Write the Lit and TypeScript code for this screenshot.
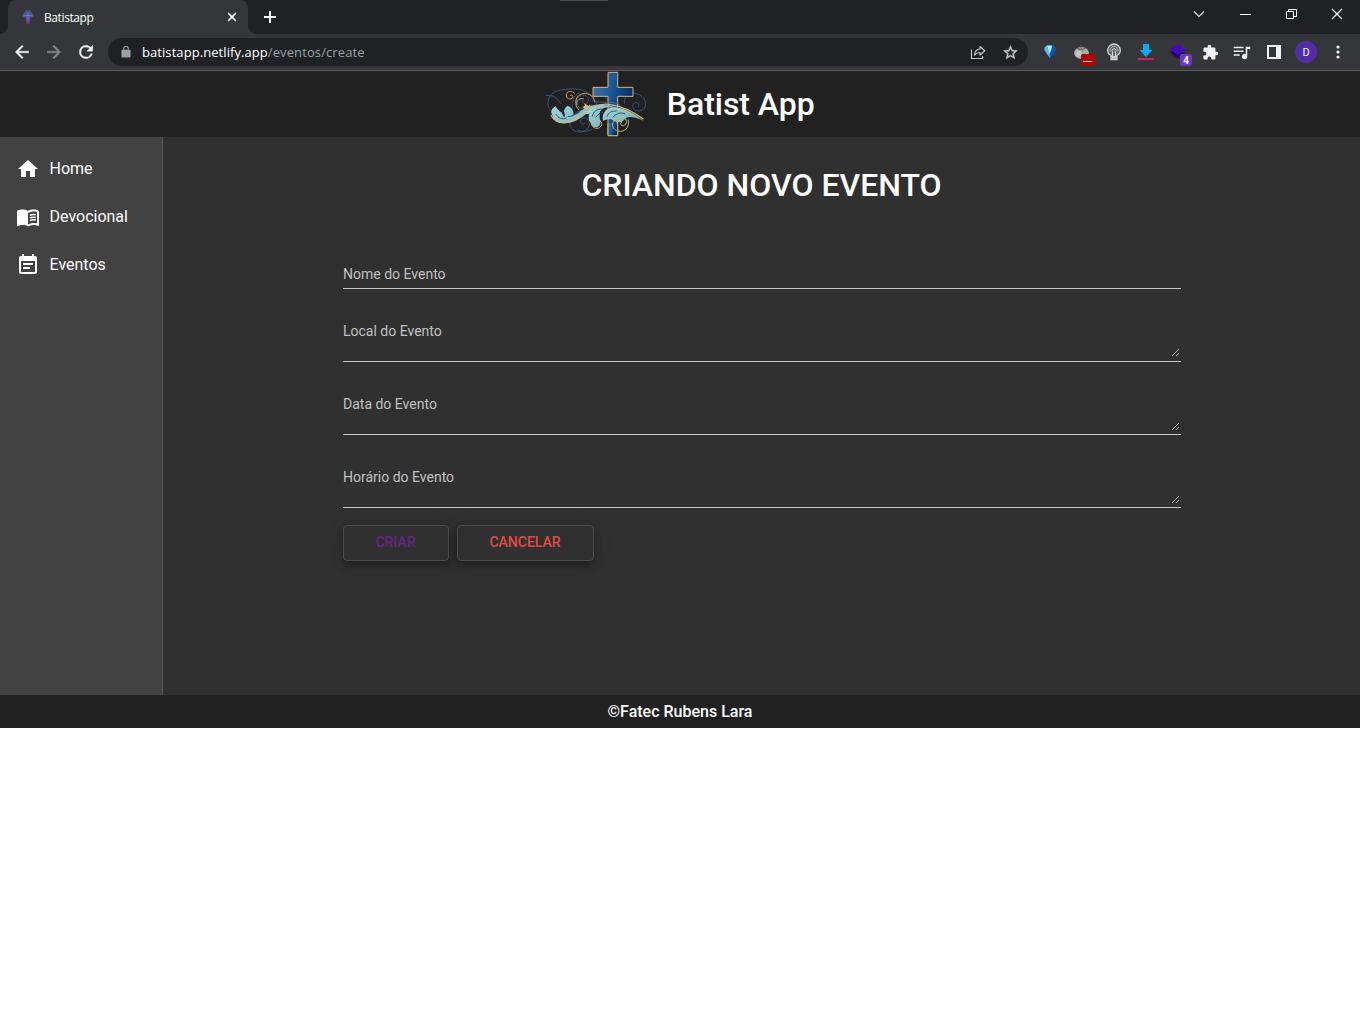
import { LitElement, html, svg, css } from "lit";
import { customElement, property } from "lit/decorators.js";

const icon = (size: number, body: unknown, box = "0 0 24 24") =>
  html`<svg width=${size} height=${size} viewBox=${box} fill="currentColor">${body}</svg>`;

const back = svg`<path d="M20 11H7.8l5.6-5.6L12 4l-8 8 8 8 1.4-1.4L7.8 13H20z" stroke="currentColor" stroke-width=".5"/>`;
const forward = svg`<path d="M4 11h12.2l-5.6-5.6L12 4l8 8-8 8-1.4-1.4 5.6-5.6H4z" stroke="currentColor" stroke-width=".5"/>`;
const reload = svg`<path d="M17.65 6.35A7.95 7.95 0 0 0 12 4a8 8 0 1 0 7.73 10h-2.08A6 6 0 1 1 12 6c1.66 0 3.14.69 4.22 1.78L13 11h7V4z" stroke="currentColor" stroke-width=".5"/>`;
const lock = svg`<path d="M18 8h-1V6A5 5 0 0 0 7 6v2H6a2 2 0 0 0-2 2v10c0 1.100.9 2 2 2h12a2 2 0 0 0 2-2V10a2 2 0 0 0-2-2zM9 6a3 3 0 0 1 6 0v2H9z"/>`;
const share = svg`<g fill="none" stroke="currentColor" stroke-width="1.200"><path d="M1.500 5.500v9h11v-2.500"/><path d="M4.500 11c.3-3.800 2.500-5.800 5.500-6V2.500l4.800 4.200L10 11V8.500c-2.300 0-4 .7-5.500 2.500z" stroke-linejoin="round"/></g>`;
const star = svg`<path d="M22 9.240l-7.190-.62L12 2 9.190 8.630 2 9.240l5.460 4.730L5.820 21 12 17.270 18.180 21l-1.630-7.030zM12 15.400l-3.760 2.270 1-4.280-3.320-2.880 4.380-.38L12 6.100l1.710 4.040 4.380.38-3.320 2.880 1 4.280z" stroke="currentColor" stroke-width=".5"/>`;
const puzzle = svg`<path d="M20.500 11H19V7a2 2 0 0 0-2-2h-4V3.500a2.500 2.500 0 0 0-5 0V5H4a2 2 0 0 0-1.990 2v3.800H3.500a2.700 2.700 0 0 1 0 5.400H2V20c0 1.100.9 2 2 2h3.800v-1.500a2.700 2.700 0 0 1 5.400 0V22H17a2 2 0 0 0 2-2v-4h1.500a2.500 2.500 0 0 0 0-5z"/>`;
const queue = svg`<path d="M1 4h13v2H1zM1 9h13v2H1zM1 14h8v2H1zM17 4h6v3h-4v10a3.500 3.500 0 1 1-2-3.100z"/>`;
const home = svg`<path d="M10 20v-6h4v6h5v-8h3L12 3 2 12h3v8z"/>`;
const book = svg`<path d="M17.500 4.500c-1.950 0-4.050.4-5.500 1.500-1.450-1.100-3.550-1.500-5.500-1.500S2.450 4.900 1 6v14.650c0 .65.730.45.750.450C3.100 20.450 5.050 20 6.500 20c1.950 0 4.050.4 5.500 1.500 1.350-.85 3.800-1.500 5.500-1.500 1.650 0 3.350.3 4.750 1.050.41.210.75-.190.75-.450V6c-1.490-1.120-3.630-1.500-5.500-1.500zm3.500 14c-1.100-.35-2.300-.5-3.500-.5-1.700 0-4.150.65-5.500 1.500V8c1.350-.85 3.800-1.500 5.500-1.500 1.200 0 2.400.15 3.500.5z"/><path d="M13.800 10.200c1.900-.8 4.100-.9 6-.5M13.800 12.900c1.900-.8 4.100-.9 6-.5M13.800 15.600c1.900-.8 4.100-.9 6-.5" fill="none" stroke="currentColor" stroke-width="1.500"/>`;
const note = svg`<path d="M17 10H7v2h10zm2-7h-1V1h-2v2H8V1H6v2H5c-1.110 0-1.990.9-1.990 2L3 19a2 2 0 0 0 2 2h14c1.100 0 2-.9 2-2V5c0-1.100-.9-2-2-2zm0 16H5V8h14zm-5-5H7v2h7z"/>`;

@customElement("browser-chrome")
class BrowserChrome extends LitElement {
  static styles = css`
    :host { display: block; height: 71px; font-family: "Open Sans", "Noto Sans", sans-serif; color: #fff; }
    svg { display: block; flex: none; }
    .strip { height: 34px; background: #202124; display: flex; padding-left: 8px; position: relative; }
    .handle { position: absolute; left: 560px; top: 0; width: 48px; height: 1px; background: #4a4b4e; }
    .tab { position: relative; box-sizing: border-box; width: 240px; height: 34px; background: #35363a; border-radius: 8px 8px 0 0; display: flex; align-items: center; padding: 0 10px 0 14px; font-size: 12px; letter-spacing: -0.4px; }
    .tab::before, .tab::after { content: ""; position: absolute; bottom: 0; width: 8px; height: 8px; }
    .tab::before { left: -8px; background: radial-gradient(circle at 0 0, transparent 7.5px, #35363a 8px); }
    .tab::after { right: -8px; background: radial-gradient(circle at 100% 0, transparent 7.5px, #35363a 8px); }
    .name { flex: 1; padding-left: 10px; }
    .plus { margin: 11px 0 0 16px; }
    .grow { flex: 1; }
    .win { width: 46px; height: 28px; display: flex; align-items: center; justify-content: center; }
    .bar { box-sizing: border-box; height: 37px; background: #35363a; border-bottom: 1px solid #5b5c5f; display: flex; align-items: center; padding: 0 6px; color: #f1f3f4; }
    .cell { width: 32px; height: 32px; display: flex; align-items: center; justify-content: center; position: relative; flex: none; }
    .dim { color: #85878a; }
    .omni { flex: 1; height: 28px; margin: 0 6px; border-radius: 14px; background: #202124; display: flex; align-items: center; padding-left: 12px; padding-right: 2px; }
    .lock { color: #9aa0a6; }
    .soft { color: #c4c7c5; }
    .url { flex: 1; padding-left: 10px; font-size: 13px; letter-spacing: 0.07px; color: #fff; white-space: nowrap; }
    .path { color: #9aa0a6; letter-spacing: 0.1px; }
    .minus { position: absolute; left: 15px; top: 18px; width: 14px; height: 12px; border-radius: 2px; background: #b80000; }
    .minus::after { content: ""; position: absolute; left: 2px; top: 7px; width: 9px; height: 1px; background: #fff; }
    .count { position: absolute; left: 18px; top: 18px; width: 12px; height: 12px; border-radius: 2px; background: #673ab7; font: 700 10px/13px Roboto, sans-serif; text-align: center; color: #fff; }
    .avatar { width: 22px; height: 22px; border-radius: 50%; background: #512da8; font: 400 11px/23px Roboto, sans-serif; text-align: center; color: #eee; }
  `;

  render() {
    return html`
      <div class="strip">
        <div class="handle"></div>
        <div class="tab">
          <svg width="12" height="14" viewBox="0 0 12 14">
            <defs><linearGradient id="fav" x2="0" y2="1"><stop stop-color="#31659d"/><stop offset="1" stop-color="#7e35a4"/></linearGradient></defs>
            <path d="M4 .5h4l1.500 2 1.700 1.500v2.500L8 8l-.3 5.500H4.300L4 8 .8 6.500V4l1.700-1.500z" fill="url(#fav)"/>
            <path d="M1.500 5.500h9M6 2v9" stroke="#7f82c0" stroke-width=".7"/>
          </svg>
          <span class="name">Batistapp</span>
          <svg width="12" height="12" viewBox="0 0 12 12"><path d="M2.200 2.200l7.600 7.600M9.800 2.200L2.200 9.800" stroke="#fff" stroke-width="1.700"/></svg>
        </div>
        <svg class="plus" width="12" height="12" viewBox="0 0 12 12"><path d="M0 6h12M6 0v12" stroke="#fff" stroke-width="2"/></svg>
        <div class="grow"></div>
        <div class="win"><svg width="12" height="8" viewBox="0 0 12 8"><path d="M1 1.500l5 5 5-5" fill="none" stroke="#ddd" stroke-width="1.100"/></svg></div>
        <div class="win"><svg width="11" height="10" viewBox="0 0 11 10"><path d="M0 5.500h11" stroke="#fff"/></svg></div>
        <div class="win"><svg width="11" height="10" viewBox="0 0 11 10"><path d="M.5 2.500h7v7h-7zM2.500 2.500V.5h8v7h-3" fill="none" stroke="#fff"/></svg></div>
        <div class="win"><svg width="12" height="12" viewBox="0 0 12 12"><path d="M1 1l10 10M11 1L1 11" stroke="#fff" stroke-width="1.200"/></svg></div>
      </div>
      <div class="bar">
        <div class="cell">${icon(20, back)}</div>
        <div class="cell dim">${icon(20, forward)}</div>
        <div class="cell">${icon(20, reload)}</div>
        <div class="omni">
          <span class="lock"><svg width="12" height="13" viewBox="2 1.500 20 23" fill="currentColor">${lock}</svg></span>
          <span class="url">batistapp.netlify.app<span class="path">/eventos/create</span></span>
          <span class="cell soft">${icon(16, share, "0 0 16 16")}</span>
          <span class="cell soft">${icon(17, star)}</span>
        </div>
        <div class="cell">
          <svg width="16" height="16" viewBox="0 0 16 16"><path d="M2.500 3.500L5 1.500h6l2.500 2v3L8 14.500l-5.500-8z" fill="#0f7fdc"/><path d="M5 1.500h5L9.500 7 7 10z" fill="#b5e4ff"/><path d="M2.500 3.500L5 1.500 7.500 10v3.500L2.500 6z" fill="#5bbcf2"/><path d="M10.500 1.500l3 2v3L8 14.500V10z" fill="#0755ac"/></svg>
        </div>
        <div class="cell">
          <svg width="18" height="16" viewBox="0 0 18 16"><ellipse cx="8.500" cy="9" rx="7.500" ry="6" fill="#aaa"/><ellipse cx="5.500" cy="9.500" rx="3" ry="3.500" fill="#c5c5c5"/><path d="M8 1l.5 4M4 4l4.500 1.500L12.500 4 10 6 8.500 5.500 6.500 6z" stroke="#666" fill="#666" stroke-width=".8"/></svg>
          <span class="minus"></span>
        </div>
        <div class="cell">
          <svg width="16" height="18" viewBox="0 0 16 18"><path d="M5 16.500v-4C3 11.500 1.700 9.500 1.700 7.300a6.300 6.300 0 0 1 12.600 0c0 2.200-1.300 4.200-3.300 5.200v4z" fill="#66686b" stroke="#d5d5d5" stroke-width="1.300"/><path d="M6.500 15V9a2 2 0 1 1 3 0v6zM5 13.500h6M5 15h6" fill="none" stroke="#d5d5d5"/><path d="M4.300 8a3.800 3.800 0 1 1 7.400 0" fill="none" stroke="#aaa"/></svg>
        </div>
        <div class="cell">
          <svg width="16" height="16" viewBox="0 0 16 16"><path d="M5 0h6v6h3.500L8 13 1.500 6H5z" fill="#05a9f4"/><path d="M0 14h16v2H0z" fill="#d81b60"/></svg>
        </div>
        <div class="cell">
          <svg width="16" height="16" viewBox="0 0 16 16"><path d="M0 8.500l7-4.500 8 5.500-7 5z" fill="#210067"/><path d="M0 5.500L8 0l7.500 6L8 11z" fill="#4908bd"/></svg>
          <span class="count">4</span>
        </div>
        <div class="cell">${icon(17, puzzle)}</div>
        <div class="cell">${icon(18, queue, "0 -1 24 24")}</div>
        <div class="cell"><svg width="14" height="14" viewBox="0 0 14 14"><path d="M0 0h14v14H0zM2 2v10h7V2z" fill="#f1f3f4" fill-rule="evenodd"/></svg></div>
        <div class="cell"><span class="avatar">D</span></div>
        <div class="cell"><svg width="4" height="14" viewBox="0 0 4 14" fill="#f1f3f4"><circle cx="2" cy="2" r="1.600"/><circle cx="2" cy="7" r="1.600"/><circle cx="2" cy="12" r="1.600"/></svg></div>
      </div>
    `;
  }
}

@customElement("batist-logo")
class BatistLogo extends LitElement {
  static styles = css`:host, svg { display: block; } `;
  render() {
    return html`<svg width="102" height="66" viewBox="30 15 306 198" fill="none" stroke-linecap="round">
      <defs>
        <linearGradient id="blue" x1="0" y1="0" x2="1" y2=".35"><stop stop-color="#3e79b8"/><stop offset=".5" stop-color="#1c5795"/><stop offset="1" stop-color="#052c62"/></linearGradient>
        <linearGradient id="leaf" x2="1" y2=".6"><stop stop-color="#a1d5da"/><stop offset="1" stop-color="#74b4c4"/></linearGradient>
      </defs>
      <g stroke="#355d8c" stroke-width="2.600">
        <path d="M33 88c25-2 34 10 44 25M48 135c-20-22-8-57 30-63 40-8 72-3 94 20 20 21 18 45 3 60"/>
        <path d="M167 118c-11 15-35 13-41-3-6-17 8-31 23-27 15 5 14 22 3 25-9 2-12-6-7-11"/>
        <path d="M105 160c-5 22 8 38 28 38 22 0 34-16 28-32-5-13-22-13-24-1-1 9 10 13 14 6"/>
        <path d="M105 165c9-22 26-33 48-34M112 125c-3-18 3-35 20-44M268 112c-3-25 22-38 45-26 26 14 24 48-2 49-17 1-24-18-12-24 9-5 16 5 11 11"/>
        <path d="M170 190c-13 8-30 7-42 3M172 90c24-15 42 5 48 16"/>
      </g>
      <g stroke="#cda452" stroke-width="3">
        <path d="M118 82c-5-8-19-9-23 1-4 11 6 20 16 14 6-5 1-13-5-9"/>
        <path d="M132 132c-16-15-12-40 5-47 17-8 40 2 42 23"/>
        <path d="M125 115c-1-12 10-20 20-17"/>
      </g>
      <path d="M141 121c9 3 10-6 6-10l14 9 5-6-2 11-14 5z" fill="#efbd58"/>
      <path d="M219 19h29v45h46v27h-46v118h-29V91h-45V64h45z" fill="url(#blue)" stroke="#d5b574" stroke-width="3" stroke-linecap="butt"/>
      <path d="M174 105c24 8 57-2 80 11" stroke="#466ca0" stroke-width="2.500"/>
      <path d="M62 121c-13 5-16 18-10 27 3 16 19 25 38 24 24-1 43-11 62-27 22-18 40-26 66-24-31-11-61-2-82 15-7 6-15 10-21 12 3-12-4-24-17-29-7 5-11 11-11 17 2 7 4 13 1 18-4-4-5-10-9-15-9-5-13-11-17-18z" fill="url(#leaf)"/>
      <path d="M151 144c11-17 27-27 51-27 18 0 29 3 40 9-20-4-34-2-43 5-7 7-4 15-5 27 4 5 5 19-7 25-11 3-18-4-20-13-6-5-8-17-4-27z" fill="url(#leaf)"/>
      <path d="M203 156c1-19 12-29 25-31 34-3 62 12 90 36-17-6-34-12-46-4-6 6-11 13-20 12-10 0-16-3-23-9-12-1-18 1-25 5z" fill="url(#leaf)"/>
      <g stroke="#214450" stroke-width="2.600">
        <path d="M63 145c7 12 18 17 31 11M99 152c14-1 23-8 34-14M172 150c3-14 12-20 28-21M183 153c6-8 11-12 20-14M216 151c5-13 15-17 29-16M234 153c11-12 23-14 35-10"/>
      </g>
      <path d="M48 148c15 31 53 27 82 5 30-22 53-42 91-38 42 4 74 24 103 43" stroke="#d7bb73" stroke-width="3.500"/>
      <path d="M221 121c41 5 73 22 101 41" stroke="#d7bb73" stroke-width="2"/>
      <path d="M219 171v38h29v-38" fill="url(#blue)" stroke="#d5b574" stroke-width="3" stroke-linecap="butt"/>
      <g stroke="#d2ae61" stroke-width="3">
        <path d="M247 175c-5-13 5-24 17-21 14 3 14 22 1 25-8 1-12-9-5-11M280 162c4 20-8 34-24 34-17 0-27-14-22-27 4-10 15-12 20-6M171 163c-6 12 2 24 15 24 12-1 18-12 12-20-5-6-13-3-13 3"/>
      </g>
    </svg>`;
  }
}

@customElement("event-field")
class EventField extends LitElement {
  @property() label = "";
  @property({ type: Boolean }) area = false;
  static styles = css`
    :host { display: block; box-sizing: border-box; border-bottom: 1px solid #c6c6c6; }
    .label { display: block; padding-left: 0.5px; font: 400 14px/16px Roboto, sans-serif; color: #c1c1c1; }
    .short { padding-bottom: 6px; }
    .tall { display: flex; justify-content: space-between; align-items: flex-end; height: 38px; }
    .tall .label { align-self: flex-start; }
    .grip { display: block; margin: 0 1px var(--grip-gap, 3px) 0; }
  `;
  render() {
    return this.area
      ? html`<div class="tall"><span class="label">${this.label}</span>
          <svg class="grip" width="9" height="9" viewBox="0 0 9 9"><path d="M1 8l7-7M5 8l3-3" stroke="#b5b5b5" stroke-width=".9"/></svg></div>`
      : html`<div class="short"><span class="label">${this.label}</span></div>`;
  }
}

@customElement("app-root")
class AppRoot extends LitElement {
  static styles = css`
    :host { display: block; height: 1016px; background: #fff; font-family: Roboto, sans-serif; color: #fff; overflow: hidden; }
    .head { height: 66px; background: #212121; display: flex; align-items: center; justify-content: center; gap: 20px; }
    .brand { font-weight: 500; font-size: 32px; line-height: 64px; letter-spacing: -0.05px; margin-left: -0.5px; }
    .body { display: flex; height: 558px; background: #303030; }
    .side { box-sizing: border-box; width: 163px; background: #424242; border-right: 1px solid #5a5a5a; padding: 8px 0 0 16px; }
    .item { display: flex; align-items: center; gap: 9.500px; height: 48px; font-size: 16px; }
    .item span { padding-bottom: 2px; }
    .item svg { display: block; }
    .content { flex: 1; display: flex; flex-direction: column; align-items: center; }
    .title { margin: 29px 0 0; font-weight: 500; font-size: 32px; line-height: 38px; }
    .form { width: 838px; margin-top: 62px; display: flex; flex-direction: column; gap: 34px; }
    .upper { --grip-gap: 4px; }
    .actions { width: 838px; display: flex; gap: 8px; margin-top: 17px; }
    .btn { box-sizing: border-box; height: 36px; padding: 0 31.5px 2px; border: 1px solid #4b4b4b; border-radius: 4px; background: #303030; font: 500 14px/32px Roboto, sans-serif; text-align: center; box-shadow: 0 3px 5px -1px rgba(0,0,0,.2), 0 6px 10px rgba(0,0,0,.14), 0 1px 18px rgba(0,0,0,.12); }
    .create { width: 106px; color: #672483; }
    .cancel { width: 137px; color: #e04b40; }
    .foot { height: 33px; background: #212121; text-align: center; font-weight: 500; font-size: 16px; line-height: 33px; }
  `;

  render() {
    const links = [
      { name: "Home", glyph: home },
      { name: "Devocional", glyph: book },
      { name: "Eventos", glyph: note },
    ];
    return html`
      <browser-chrome></browser-chrome>
      <header class="head"><batist-logo></batist-logo><span class="brand">Batist App</span></header>
      <div class="body">
        <nav class="side">${links.map((l) => html`<div class="item">${icon(24, l.glyph)}<span>${l.name}</span></div>`)}</nav>
        <main class="content">
          <h1 class="title">CRIANDO NOVO EVENTO</h1>
          <div class="form">
            <event-field label="Nome do Evento"></event-field>
            <event-field class="upper" area label="Local do Evento"></event-field>
            <event-field area label="Data do Evento"></event-field>
            <event-field area label="Horário do Evento"></event-field>
          </div>
          <div class="actions">
            <button class="btn create">CRIAR</button>
            <button class="btn cancel">CANCELAR</button>
          </div>
        </main>
      </div>
      <footer class="foot">©Fatec Rubens Lara</footer>
    `;
  }
}
